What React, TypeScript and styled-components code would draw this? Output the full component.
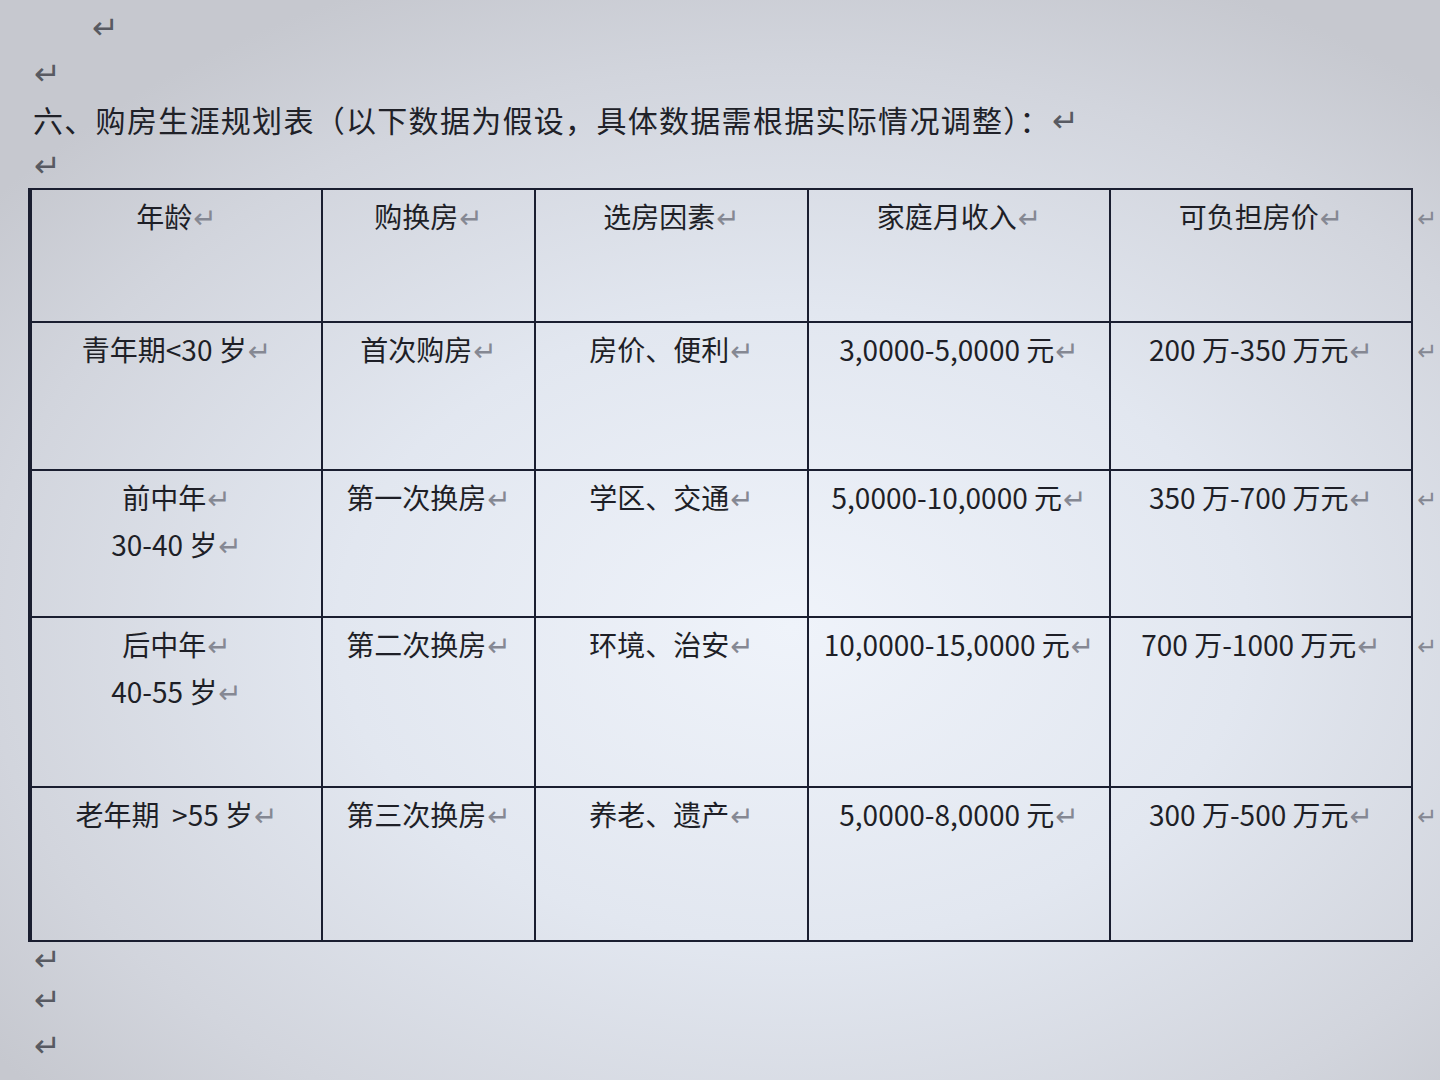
import { createGlobalStyle } from "styled-components";
import styled from "styled-components";

const GlobalStyle = createGlobalStyle`
  html, body {
    margin: 0;
    padding: 0;
  }
  body {
    font-family: "Noto Sans CJK SC", "Noto Sans", sans-serif;
    color: #1c1d24;
  }
`;

const Page = styled.div`
  width: 1440px;
  height: 1080px;
  overflow: hidden;
  box-sizing: border-box;
  padding: 4px 0 0 28px;
  display: flex;
  flex-direction: column;
  align-items: flex-start;
  background: radial-gradient(
    ellipse 70% 65% at 55% 58%,
    #eff3fa 0%,
    #e2e7f0 45%,
    #d2d5dd 80%,
    #c6c8cf 100%
  );
`;

const Line = styled.div<{ $h?: number; $indent?: number }>`
  flex: none;
  height: ${(p) => p.$h ?? 46}px;
  line-height: ${(p) => p.$h ?? 46}px;
  padding-left: ${(p) => 5 + (p.$indent ?? 0)}px;
  white-space: nowrap;
`;

const Heading = styled(Line)`
  font-size: 30px;
  letter-spacing: 1.3px;
  color: #202128;
`;

// Word's paragraph mark, kept as a text glyph
const Mark = styled.span<{ $size?: number; $light?: boolean; $empty?: boolean }>`
  font-family: "DejaVu Sans", sans-serif;
  font-size: ${(p) => p.$size ?? 32}px;
  line-height: 1;
  vertical-align: ${(p) => (p.$empty ? "-5px" : "baseline")};
  letter-spacing: 0;
  margin-left: 1px;
  color: ${(p) => (p.$light ? "#858893" : "#585a62")};
`;

const Table = styled.table`
  flex: none;
  width: 1406px;
  border-collapse: collapse;
  table-layout: fixed;
  font-size: 28px;
`;

const Cell = styled.td<{ $first?: boolean }>`
  border: 2px solid #1a1e30;
  border-left-width: ${(p) => (p.$first ? 4 : 2)}px;
  vertical-align: top;
  padding: 3px 0 0;
  color: #1e1f27;
`;

const CellLines = styled.div`
  display: flex;
  flex-direction: column;
  align-items: center;
  line-height: 47px;
  white-space: pre;
`;

const EndCell = styled.td`
  border: none;
  vertical-align: top;
  padding: 3px 0 0 3px;
  line-height: 47px;
  white-space: nowrap;
`;

const cols = [292, 213, 273, 302, 302, 24];

const rows: { h: number; cells: string[][] }[] = [
  { h: 133, cells: [["年龄"], ["购换房"], ["选房因素"], ["家庭月收入"], ["可负担房价"]] },
  {
    h: 148,
    cells: [["青年期<30 岁"], ["首次购房"], ["房价、便利"], ["3,0000-5,0000 元"], ["200 万-350 万元"]],
  },
  {
    h: 147,
    cells: [["前中年", "30-40 岁"], ["第一次换房"], ["学区、交通"], ["5,0000-10,0000 元"], ["350 万-700 万元"]],
  },
  {
    h: 170,
    cells: [["后中年", "40-55 岁"], ["第二次换房"], ["环境、治安"], ["10,0000-15,0000 元"], ["700 万-1000 万元"]],
  },
  {
    h: 154,
    cells: [["老年期  >55 岁"], ["第三次换房"], ["养老、遗产"], ["5,0000-8,0000 元"], ["300 万-500 万元"]],
  },
];

export default function App() {
  return (
    <>
      <GlobalStyle />
      <Page>
        <Line $indent={58}>
          <Mark $empty>↵</Mark>
        </Line>
        <Line>
          <Mark $empty>↵</Mark>
        </Line>
        <Heading>
          六、购房生涯规划表（以下数据为假设，具体数据需根据实际情况调整）：<Mark>↵</Mark>
        </Heading>
        <Line>
          <Mark $empty>↵</Mark>
        </Line>
        <Table>
          <colgroup>
            {cols.map((w, i) => (
              <col key={i} style={{ width: w }} />
            ))}
          </colgroup>
          <tbody>
            {rows.map((row, ri) => (
              <tr key={ri} style={{ height: row.h }}>
                {row.cells.map((lines, ci) => (
                  <Cell key={ci} $first={ci === 0}>
                    <CellLines>
                      {lines.map((t, li) => (
                        <div key={li}>
                          {t}
                          <Mark $light $size={28}>
                            ↵
                          </Mark>
                        </div>
                      ))}
                    </CellLines>
                  </Cell>
                ))}
                <EndCell>
                  <Mark $light $size={24}>
                    ↵
                  </Mark>
                </EndCell>
              </tr>
            ))}
          </tbody>
        </Table>
        <Line $h={34}>
          <Mark $empty>↵</Mark>
        </Line>
        <Line>
          <Mark $empty>↵</Mark>
        </Line>
        <Line>
          <Mark $empty>↵</Mark>
        </Line>
      </Page>
    </>
  );
}
